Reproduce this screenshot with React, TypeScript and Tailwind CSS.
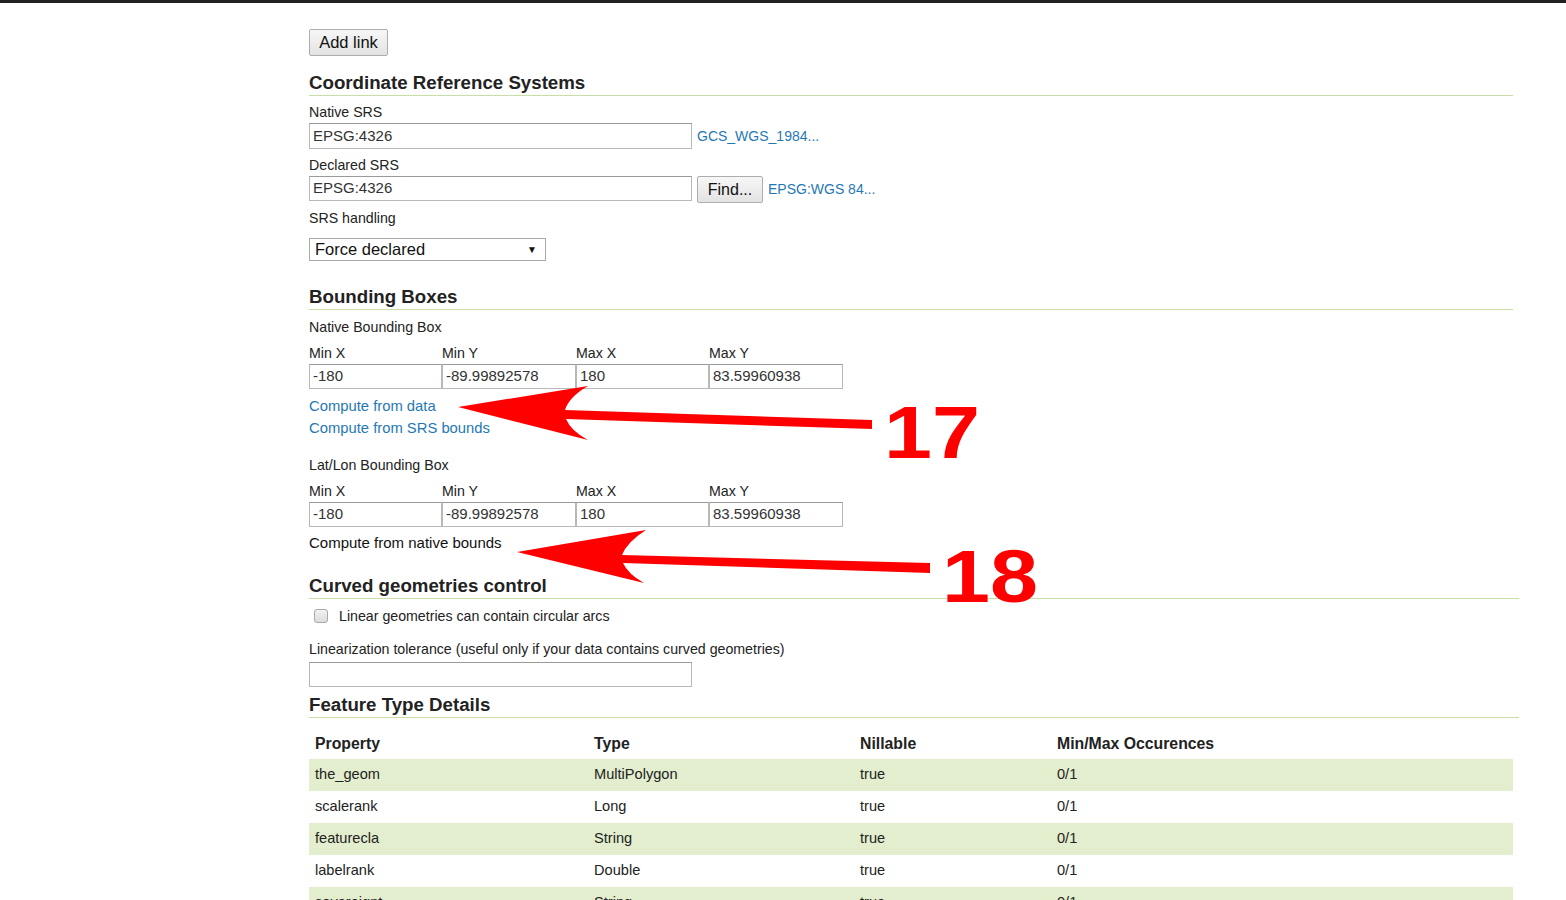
import React from "react";

const font = { fontFamily: '"Liberation Sans", Arial, sans-serif' };

type Row = { name: string; type: string; nillable: string; occ: string };

const rows: Row[] = [
  { name: "the_geom", type: "MultiPolygon", nillable: "true", occ: "0/1" },
  { name: "scalerank", type: "Long", nillable: "true", occ: "0/1" },
  { name: "featurecla", type: "String", nillable: "true", occ: "0/1" },
  { name: "labelrank", type: "Double", nillable: "true", occ: "0/1" },
  { name: "sovereignt", type: "String", nillable: "true", occ: "0/1" },
];

const Heading = ({ children, wide }: { children: React.ReactNode; wide?: boolean }) => (
  <div
    className={`${wide ? "w-[1210px]" : "w-[1204px]"} border-b border-[#c9dda6] pb-[2px] text-[18.7px] font-bold leading-[21px] text-[#222]`}
  >
    {children}
  </div>
);

const Label = ({ children, className = "" }: { children: React.ReactNode; className?: string }) => (
  <div className={`text-[14.2px] leading-[18px] text-[#222] ${className}`}>{children}</div>
);

const TextBox = ({ value, className = "" }: { value: string; className?: string }) => (
  <div
    className={`flex items-center border border-[#b8b8b8] border-t-[#9a9a9a] bg-white px-[3px] text-[#333] ${className}`}
  >
    {value}
  </div>
);

const Btn = ({ children, className = "" }: { children: React.ReactNode; className?: string }) => (
  <div
    className={`flex items-center justify-center rounded-[2px] border border-[#adadad] bg-gradient-to-b from-[#f7f7f7] to-[#e3e3e3] text-[#111] ${className}`}
  >
    {children}
  </div>
);

const BBox = ({ values }: { values: string[] }) => (
  <>
    <div className="mt-[8px] grid w-[534px] grid-cols-[133px_134px_133px_134px]">
      {["Min X", "Min Y", "Max X", "Max Y"].map((l) => (
        <Label key={l}>{l}</Label>
      ))}
    </div>
    <div className="mt-[2px] grid w-[534px] grid-cols-[133px_134px_133px_134px]">
      {values.map((v, i) => (
        <TextBox key={i} value={v} className="h-[25px] text-[15px]" />
      ))}
    </div>
  </>
);

const link = "text-[#1f78b4]";

export default function App() {
  return (
    <div className="relative min-h-[900px] bg-white" style={font}>
      <div className="h-[3px] bg-[#222]" />
      <div className="pl-[309px] pb-10">
        <Btn className="mt-[26px] h-[27px] w-[79px] text-[16.5px]">Add link</Btn>

        <div className="mt-[16px]">
          <Heading>Coordinate Reference Systems</Heading>
        </div>
        <Label className="mt-[7px]">Native SRS</Label>
        <div className="mt-[2px] flex items-center">
          <TextBox value="EPSG:4326" className="h-[26px] w-[383px] text-[15px]" />
          <span className={`ml-[5px] text-[14px] ${link}`}>GCS_WGS_1984...</span>
        </div>
        <Label className="mt-[7px]">Declared SRS</Label>
        <div className="mt-[2px] flex items-start">
          <TextBox value="EPSG:4326" className="h-[25px] w-[383px] text-[15px]" />
          <Btn className="ml-[5px] h-[27px] w-[66px] text-[16px]">Find...</Btn>
          <span className={`ml-[5px] self-center text-[14px] ${link}`}>EPSG:WGS 84...</span>
        </div>
        <Label className="mt-[6px]">SRS handling</Label>
        <div className="mt-[11px] flex h-[23px] w-[237px] items-center justify-between border border-[#aaa] bg-white pl-[5px] pr-[8px] text-[16.5px] text-[#111]">
          <span>Force declared</span>
          <span className="text-[10px]">▼</span>
        </div>

        <div className="mt-[25px]">
          <Heading>Bounding Boxes</Heading>
        </div>
        <Label className="mt-[8px]">Native Bounding Box</Label>
        <BBox values={["-180", "-89.99892578", "180", "83.59960938"]} />
        <div className={`mt-[8px] text-[14.8px] leading-[18px] ${link}`}>Compute from data</div>
        <div className={`mt-[4px] text-[14.8px] leading-[18px] ${link}`}>Compute from SRS bounds</div>

        <Label className="mt-[19px]">Lat/Lon Bounding Box</Label>
        <BBox values={["-180", "-89.99892578", "180", "83.59960938"]} />
        <div className="mt-[7px] text-[15px] leading-[18px] text-[#111]">Compute from native bounds</div>

        <div className="mt-[23px]">
          <Heading wide>Curved geometries control</Heading>
        </div>
        <div className="mt-[8px] flex h-[18px] items-center">
          <div className="ml-[5px] h-[14px] w-[14px] rounded-[3px] border border-[#a8a8a8] bg-gradient-to-b from-[#f2f2f2] to-[#dcdcdc]" />
          <Label className="ml-[11px]">Linear geometries can contain circular arcs</Label>
        </div>
        <Label className="mt-[15px]">Linearization tolerance (useful only if your data contains curved geometries)</Label>
        <TextBox value="" className="mt-[4px] h-[25px] w-[383px] text-[15px]" />

        <div className="mt-[7px]">
          <Heading wide>Feature Type Details</Heading>
        </div>
        <div className="mt-[10px] w-[1204px] text-[#222]">
          <div className="grid h-[31px] grid-cols-[279px_266px_197px_462px] items-center text-[15.8px] font-bold">
            <div className="pl-[6px]">Property</div>
            <div className="pl-[6px]">Type</div>
            <div className="pl-[6px]">Nillable</div>
            <div className="pl-[6px]">Min/Max Occurences</div>
          </div>
          {rows.map((r, i) => (
            <div
              key={r.name}
              className={`grid h-[32px] grid-cols-[279px_266px_197px_462px] items-center text-[14.6px] ${
                i % 2 === 0 ? "bg-[#e2eecd]" : "bg-white"
              }`}
            >
              <div className="pl-[6px]">{r.name}</div>
              <div className="pl-[6px]">{r.type}</div>
              <div className="pl-[6px]">{r.nillable}</div>
              <div className="pl-[6px]">{r.occ}</div>
            </div>
          ))}
        </div>
      </div>

      {/* red annotation arrows drawn over the page */}
      <svg
        className="pointer-events-none absolute left-0 top-0"
        width="1566"
        height="900"
        viewBox="0 0 1566 900"
      >
        <path
          d="M458,407 L588,386 Q569,397 565,410 L872,420 L872,429 L566,419 Q571,431 588,440 Z"
          fill="#ff0000"
        />
        <path
          d="M517,552 L646,530 Q627,542 622,555 L930,563 L930,573 L623,563 Q628,574 644,583 Z"
          fill="#ff0000"
        />
        <text
          x="884"
          y="458"
          fontSize="75"
          fontWeight="900"
          fill="#ff0000"
          textLength="96"
          lengthAdjust="spacingAndGlyphs"
          style={font}
        >
          17
        </text>
        <text
          x="942"
          y="602"
          fontSize="75"
          fontWeight="900"
          fill="#ff0000"
          textLength="96"
          lengthAdjust="spacingAndGlyphs"
          style={font}
        >
          18
        </text>
      </svg>
    </div>
  );
}
